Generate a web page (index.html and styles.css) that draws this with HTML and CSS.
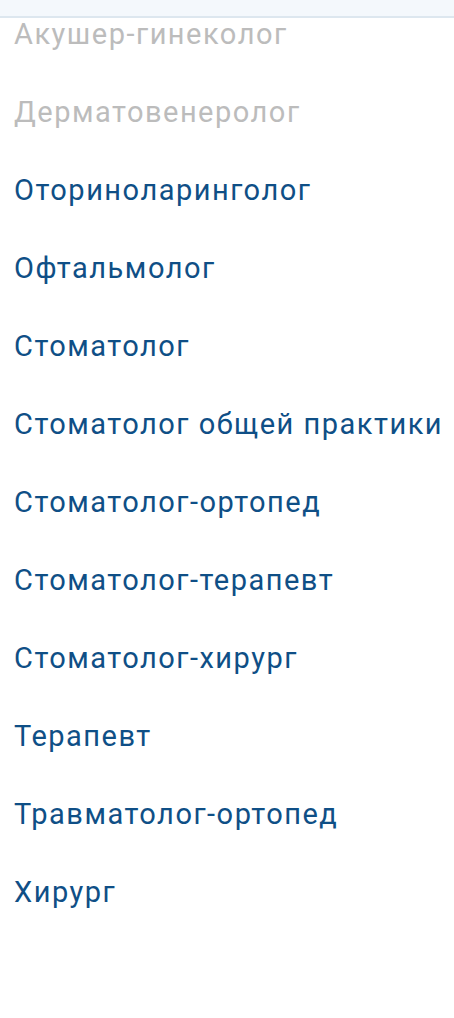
FILE: index.html
```html
<!DOCTYPE html>
<html lang="ru">
<head>
<meta charset="utf-8">
<link rel="stylesheet" href="styles.css">
</head>
<body>
<div class="topbar"></div>
<ul class="list">
  <li class="item disabled">Акушер-гинеколог</li>
  <li class="item disabled">Дерматовенеролог</li>
  <li class="item">Оториноларинголог</li>
  <li class="item">Офтальмолог</li>
  <li class="item">Стоматолог</li>
  <li class="item">Стоматолог общей практики</li>
  <li class="item">Стоматолог-ортопед</li>
  <li class="item">Стоматолог-терапевт</li>
  <li class="item">Стоматолог-хирург</li>
  <li class="item">Терапевт</li>
  <li class="item">Травматолог-ортопед</li>
  <li class="item">Хирург</li>
</ul>
</body>
</html>
```
FILE: styles.css
```css
html, body {
  margin: 0;
  padding: 0;
  background: #ffffff;
}
body {
  font-family: Roboto, "Noto Sans", sans-serif;
  overflow: hidden;
}
.topbar {
  position: fixed;
  top: 0;
  left: 0;
  right: 0;
  height: 16px;
  background: #f4f8fc;
  border-bottom: 2px solid #dde7ef;
  z-index: 2;
}
.list {
  list-style: none;
  margin: -5px 0 0 0;
  padding: 0;
}
.item {
  font-size: 29px;
  letter-spacing: 1.5px;
  line-height: 78px;
  height: 78px;
  padding-left: 14px;
  color: #0f4f86;
  white-space: nowrap;
}
.item.disabled {
  color: #bcbcbc;
}
```
